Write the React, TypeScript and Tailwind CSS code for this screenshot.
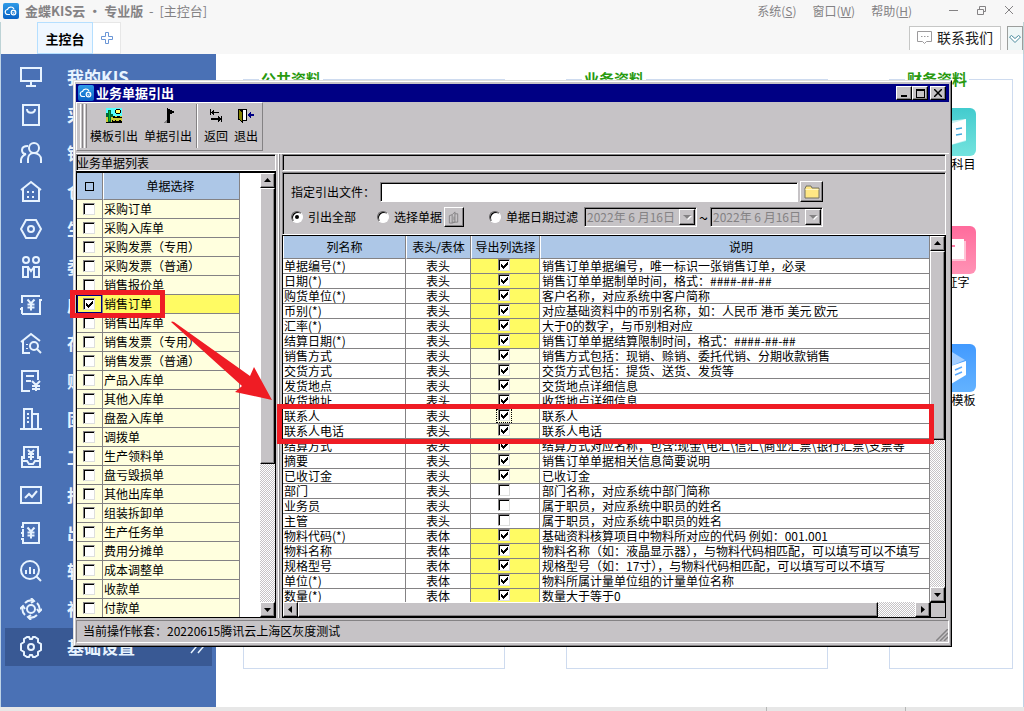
import { useState } from 'react'
import type { ReactNode } from 'react'

const raised =
  'border border-t-white border-l-white border-r-black border-b-black shadow-[inset_-1px_-1px_0_#848284] bg-[#c6c3c6]'
const sunken =
  'border border-t-[#848284] border-l-[#848284] border-r-white border-b-white shadow-[inset_1px_1px_0_#000]'
const dither =
  'bg-[conic-gradient(#fff_25%,#c6c3c6_0_50%,#fff_0_75%,#c6c3c6_0)] bg-[length:2px_2px]'

const yen = <path d="M7.5 5.5l3.5 4 3.5-4M11 9.500v7M7.500 10.500h7M7.500 13.500h7" />

const menu: { label: string; icon: ReactNode }[] = [
  { label: '我的KIS', icon: <path d="M1 2h20v13H1zM11 15v4M6 20h10" /> },
  { label: '采购管理', icon: <path d="M3 1h16v20H3zM7 5c0 5 8 5 8 0" /> },
  {
    label: '销售管理',
    icon: (
      <>
        <circle cx="14" cy="6" r="5" />
        <path d="M8 21v-4c0-3 2-6 6-6s7 3 7 6v4M8 4c-4 0-6 2-6 4 0 3 2 4 4 4-3 1-5 4-5 6v3" />
      </>
    ),
  },
  {
    label: '仓存管理',
    icon: <path d="M1 10L11 2l10 8M3 9v12h16V9M7 12h2M7 17h2M12 17h2M12 12h2" />,
  },
  {
    label: '生产管理',
    icon: (
      <>
        <path d="M6 2h10l5 9-5 9H6l-5-9z" />
        <circle cx="11" cy="11" r="3" />
      </>
    ),
  },
  {
    label: '委外管理',
    icon: (
      <>
        <circle cx="6" cy="4" r="3" />
        <circle cx="16" cy="4" r="3" />
        <path d="M3 11h5v10H3zM14 11h5v10h-5zM8 11l3 4 3-4" />
      </>
    ),
  },
  { label: '应收应付', icon: <>{yen}<path d="M2 9V2h18M22 6h-3M20 6v14H2M0 15h3M2 13v7" /></> },
  {
    label: '存货核算',
    icon: (
      <>
        <path d="M1 10L11 2l9 7M3 9v12h7M7 12v1M7 16v1" />
        <circle cx="14" cy="14" r="4" />
        <path d="M17 17l4 4" />
      </>
    ),
  },
  {
    label: '账务处理',
    icon: <path d="M10 21H2V1h16v9M6 6h8M6 11h5M12 11l4 4 4-4M16 15v6M12 16h8M12 19h8" />,
  },
  { label: '固定资产', icon: <path d="M0 21h22M4 21V1h8v20M12 6h6v15M7 6h2M7 10h2M7 14h2" /> },
  {
    label: '工资管理',
    icon: (
      <>
        <path d="M4 13V1h14v12M2 10v11h18V10M2 15l5 0 2 3h4l2-3h5" />
        <path d="M8 4l3 3 3-3M11 7v7M8 8h6M8 11h6" />
      </>
    ),
  },
  { label: '报表分析', icon: <path d="M1 3h20v16H1zM5 14l4-4 3 3 5-6" /> },
  { label: '出纳管理', icon: <>{yen}<path d="M3 4V1h16v20H3v-3M3 7v3M3 12v3M1 5h3M1 11h3M1 17h3" /></> },
  {
    label: '轻分析',
    icon: (
      <>
        <circle cx="10" cy="10" r="9" />
        <path d="M6 10v4M10 7v7M14 9v5M16 16l5 5" />
      </>
    ),
  },
  {
    label: '社区服务',
    icon: (
      <>
        <circle cx="11" cy="11" r="4" />
        <path d="M5 5a8.500 8.500 0 0 1 9-2M17 5a8.500 8.500 0 0 1 2 9M17 17a8.500 8.500 0 0 1-9 2M5 17a8.500 8.500 0 0 1-2-9" />
        <path d="M11 0l3 3-3 2M22 11l-3 3-2-3M11 22l-3-3 3-2M0 11l3-3 2 3" />
      </>
    ),
  },
  {
    label: '基础设置',
    icon: (
      <>
        <path d="M7 1h2l1 2h2l1-2h2l3 2v3l3 2v6l-3 2v3l-3 2h-2l-1-2h-2l-1 2H7l-3-2v-3l-3-2V8l3-2V3z" />
        <circle cx="11" cy="11" r="3" />
      </>
    ),
  },
]

const docTypes = [
  '采购订单', '采购入库单', '采购发票（专用）', '采购发票（普通）', '销售报价单', '销售订单',
  '销售出库单', '销售发票（专用）', '销售发票（普通）', '产品入库单', '其他入库单', '盘盈入库单',
  '调拨单', '生产领料单', '盘亏毁损单', '其他出库单', '组装拆卸单', '生产任务单', '费用分摊单',
  '成本调整单', '收款单', '付款单',
]

// kind: r = required, o = optional, n = not exported
const fields: [string, string, 'r' | 'o' | 'n', string][] = [
  ['单据编号(*)', '表头', 'r', '销售订单单据编号，唯一标识一张销售订单，必录'],
  ['日期(*)', '表头', 'r', '销售订单单据制单时间，格式：####-##-##'],
  ['购货单位(*)', '表头', 'r', '客户名称，对应系统中客户简称'],
  ['币别(*)', '表头', 'r', '对应基础资料中的币别名称，如：人民币 港币 美元 欧元'],
  ['汇率(*)', '表头', 'r', '大于0的数字，与币别相对应'],
  ['结算日期(*)', '表头', 'r', '销售订单单据结算限制时间，格式：####-##-##'],
  ['销售方式', '表头', 'o', '销售方式包括：现销、赊销、委托代销、分期收款销售'],
  ['交货方式', '表头', 'o', '交货方式包括：提货、送货、发货等'],
  ['发货地点', '表头', 'o', '交货地点详细信息'],
  ['收货地址', '表头', 'o', '收货地点详细信息'],
  ['联系人', '表头', 'o', '联系人'],
  ['联系人电话', '表头', 'o', '联系人电话'],
  ['结算方式', '表头', 'o', '结算方式对应名称，包含:现金\\电汇\\信汇\\商业汇票\\银行汇票\\支票等'],
  ['摘要', '表头', 'o', '销售订单单据相关信息简要说明'],
  ['已收订金', '表头', 'o', '已收订金'],
  ['部门', '表头', 'n', '部门名称，对应系统中部门简称'],
  ['业务员', '表头', 'n', '属于职员，对应系统中职员的姓名'],
  ['主管', '表头', 'n', '属于职员，对应系统中职员的姓名'],
  ['物料代码(*)', '表体', 'r', '基础资料核算项目中物料所对应的代码 例如：001.001'],
  ['物料名称', '表体', 'r', '物料名称（如：液晶显示器），与物料代码相匹配，可以填写可以不填写'],
  ['规格型号', '表体', 'r', '规格型号（如：17寸），与物料代码相匹配，可以填写可以不填写'],
  ['单位(*)', '表体', 'r', '物料所属计量单位组的计量单位名称'],
  ['数量(*)', '表体', 'r', '数量大于等于0'],
]

const kindBg = { r: 'bg-[#fffb63]', o: 'bg-[#ffffde]', n: 'bg-white' }

function CheckBox({ label, checked, onChange }: { label: string; checked: boolean; onChange: () => void }) {
  return (
    <span className="relative block size-3">
      <input
        type="checkbox"
        aria-label={label}
        checked={checked}
        onChange={onChange}
        className="peer block size-3 appearance-none border border-t-[#848284] border-l-[#848284] border-r-[#dedfde] border-b-[#dedfde] bg-white shadow-[inset_1px_1px_0_#000]"
      />
      <svg viewBox="0 0 12 12" className="pointer-events-none absolute inset-0 hidden peer-checked:block" shapeRendering="crispEdges">
        <path d="M3 5h1v1h1v1h1V6h1V5h1V4h1V3h1v3H9v1H8v1H7v1H6v1H5V9H4V8H3z" />
      </svg>
    </span>
  )
}

function Radio({ label, checked, onChange }: { label: string; checked: boolean; onChange: () => void }) {
  return (
    <label className="flex items-center gap-[5px]">
      <span className="relative block size-3">
        <input
          type="radio"
          name="range"
          checked={checked}
          onChange={onChange}
          className="peer block size-3 appearance-none rounded-full border border-t-[#636163] border-l-[#636163] border-r-white border-b-white bg-white shadow-[inset_1px_1px_0_#000]"
        />
        <span className="absolute top-1 left-1 hidden size-1 rounded-full bg-black peer-checked:block" />
      </span>
      {label}
    </label>
  )
}

function Logo({ className }: { className: string }) {
  return (
    <svg viewBox="0 0 16 16" className={className}>
      <defs>
        <linearGradient id="logo" x1="0" y1="0" x2="0" y2="1">
          <stop offset="0" stopColor="#2f9be8" />
          <stop offset="1" stopColor="#0a62c4" />
        </linearGradient>
      </defs>
      <rect width="16" height="16" rx="2" fill="url(#logo)" />
      <g fill="none" stroke="#fff" strokeWidth="1.200">
        <path d="M7 11.500H5a2.500 2.500 0 0 1-.5-5A3.500 3.500 0 0 1 11 6" />
        <circle cx="10.500" cy="9.500" r="2.300" />
        <path d="M9.500 9.500l1 1 1-2" strokeWidth=".8" />
      </g>
    </svg>
  )
}

function ScrollButton({ dir }: { dir: 'up' | 'down' | 'left' | 'right' }) {
  const d = { up: 'M4 9h7L7.500 5z', down: 'M4 6h7l-3.500 4z', left: 'M9 4v7L5 7.500z', right: 'M6 4v7l4-3.500z' }[dir]
  return (
    <button aria-label={dir} className={`block size-[15px] shrink-0 ${raised}`}>
      <svg viewBox="1 1 13 13" className="size-[13px]">
        <path d={d} />
      </svg>
    </button>
  )
}

function DateBox({ label }: { label: string }) {
  return (
    <div className={`flex h-5 w-[113px] items-center pl-0.5 ${sunken}`}>
      <input aria-label={label} disabled defaultValue="2022年 6 月16日" className="min-w-0 flex-1 text-xs text-[#848284]" />
      <button aria-label="选择日期" disabled className={`mr-px size-4 ${raised}`}>
        <svg viewBox="0 0 14 14" className="size-[14px]">
          <path d="M4 6h8l-4 4z" fill="#fff" />
          <path d="M3 5h8L7 9z" fill="#848284" />
        </svg>
      </button>
    </div>
  )
}

function ToolButton({ label, className, children }: { label: string; className: string; children: ReactNode }) {
  return (
    <button className={`flex flex-col items-center gap-1 ${className}`}>
      <svg viewBox="0 0 16 16" className="size-4" shapeRendering="crispEdges">
        {children}
      </svg>
      <span className="leading-4">{label}</span>
    </button>
  )
}

function Toolbar() {
  return (
    <div className="h-[51px]">
      <div className="flex h-[49px] w-fit border border-t-white border-l-white border-r-[#848284] border-b-[#848284] pt-[5px]">
        <div className="-mt-1 ml-[3px] flex h-[44px] gap-px">
          <span className="w-[3px] border-r border-l border-r-[#848284] border-l-white" />
          <span className="w-[3px] border-r border-l border-r-[#848284] border-l-white" />
        </div>
        <ToolButton label="模板引出" className="w-[54px]">
          <path d="M0 0h16v9H0z" fill="#5ff" />
          <path d="M0 8h16v7H0z" fill="#cc3" />
          <path d="M10 1h4v1h1v3h-1v1h-4V5H9V2h1z" />
          <path d="M10 2h4v3h-4z" fill="#ff6" />
          <path d="M2 2h3v12H2zM0 5h2v4H0zM5 6h2v3H5z" fill="#063" />
          <path d="M3 3h1v10H3z" fill="#0b3" />
          <path d="M7 8h2v1h2V8h3v1h2v1H7zM6 12h1v1h2v-1h1v1h3v-1h2v1h1v1H6zM0 14h16v1H0z" />
        </ToolButton>
        <ToolButton label="单据引出" className="w-[54px]">
          <path d="M7 0h1v1h2v1h2v1h2v2h-2v1h-2v9H7z" />
          <path d="M7 12v3H4v-1h1v-1h1v-1z" fill="#848284" />
        </ToolButton>
        <span className="-mt-1 mr-px ml-px h-[44px] w-[2px] border-r border-l border-r-white border-l-[#848284]" />
        <ToolButton label="返回" className="ml-0.5 w-[30px]">
          <path d="M2 1h1v6H2zM3 4h1V3h1V2h1v2h5v1H6v2H5V6H4V5H3zM13 8h1v6h-1zM3 10h7V8h1v1h1v1h1v2h-1v1h-1v1h-1v-2H3z" />
        </ToolButton>
        <ToolButton label="退出" className="mr-px w-[30px]">
          <path d="M0 1h9v12H5v2H4v-1H3v-1H2v-1H0z" />
          <path d="M5 2h3v10H5z" fill="#fff" />
          <path d="M1 2h1v1h1v1h1v9H3v-1H2v-1H1z" fill="#848200" />
          <path d="M10 6h1V5h1V4h1v2h3v2h-3v2h-1V9h-1V8h-1z" fill="#000084" />
        </ToolButton>
      </div>
    </div>
  )
}

function DocList() {
  const [picked, setPicked] = useState(['销售订单'])
  const toggle = (name: string) =>
    setPicked(picked.includes(name) ? picked.filter((n) => n !== name) : [...picked, name])

  return (
    <div className="w-[200px] shrink-0">
      <h2 className={`h-[17px] leading-[15px] ${sunken}`}>业务单据列表</h2>
      <div className="flex border-t-2 border-b border-l border-r border-black bg-white">
        <div className="h-[444px] flex-1 overflow-hidden">
          <table className="w-[163px] table-fixed border-separate border-spacing-0">
            <colgroup>
              <col className="w-[26px]" />
              <col />
            </colgroup>
            <thead>
              <tr className="bg-[#adc7e7] leading-[26px]">
                <th className="h-[27px] border-r border-b border-[#848284] p-0 pr-px">
                  <span className="mx-auto block size-[9px] border border-black" />
                </th>
                <th className="h-[27px] border-r border-b border-l border-[#848284] border-l-white p-0 pr-0.5 font-normal">单据选择</th>
              </tr>
            </thead>
            <tbody>
              {docTypes.map((name) => {
                const on = picked.includes(name)
                return (
                  <tr key={name} className={on ? 'bg-[#fffb63]' : 'bg-[#ffffde]'}>
                    <td className="h-[19px] border-r border-b border-[#848284] p-0">
                      <div className={`flex h-[18px] items-center justify-center border pr-px pb-px ${on ? 'border-[#000084]' : 'border-transparent'}`}>
                        <CheckBox label={name} checked={on} onChange={() => toggle(name)} />
                      </div>
                    </td>
                    <td className="h-[19px] border-r border-b border-[#848284] p-0 pl-px leading-[18px] whitespace-nowrap">{name}</td>
                  </tr>
                )
              })}
            </tbody>
          </table>
        </div>
        <div className={`flex w-[15px] flex-col ${dither}`}>
          <ScrollButton dir="up" />
          <div className={`h-[276px] ${raised}`} />
          <div className="flex-1" />
          <ScrollButton dir="down" />
        </div>
      </div>
    </div>
  )
}

function ExportForm() {
  const [range, setRange] = useState('all')
  return (
    <div className={`h-[63px] pt-2 pl-2 ${sunken}`}>
      <div className="flex items-center">
        <label htmlFor="file" className="w-[89px]">
          指定引出文件：
        </label>
        <input id="file" className={`h-5 w-[418px] bg-white px-1 ${sunken}`} />
        <button aria-label="浏览" className={`ml-0.5 flex h-[21px] w-[23px] items-center justify-center ${raised}`}>
          <svg viewBox="0 0 16 14" className="h-[14px] w-4">
            <path d="M1 13V3l1-1V1h5l1 2h7v10z" fill="#ffe784" stroke="#737163" />
            <path d="M1.500 4.500h13" stroke="#fff7c6" />
          </svg>
        </button>
      </div>
      <div className="mt-[5px] flex h-5 items-center">
        <div className="w-[86px]">
          <Radio label="引出全部" checked={range === 'all'} onChange={() => setRange('all')} />
        </div>
        <Radio label="选择单据" checked={range === 'pick'} onChange={() => setRange('pick')} />
        <button aria-label="选择" className={`ml-0.5 flex size-5 items-center justify-center ${raised}`}>
          <svg viewBox="0 0 12 14" className="h-[13px] w-3" fill="none" stroke="#848284">
            <path d="M1 5l3-1v9H1zM4 4l3-3v11l-3 1M7 3h3v9H4M6 6v4" />
          </svg>
        </button>
        <div className="ml-[25px] w-[95px]">
          <Radio label="单据日期过滤" checked={range === 'date'} onChange={() => setRange('date')} />
        </div>
        <DateBox label="开始日期" />
        <span className="w-[13px] text-center text-base leading-5">~</span>
        <DateBox label="结束日期" />
      </div>
    </div>
  )
}

function FieldTable() {
  const [off, setOff] = useState(fields.filter((f) => f[2] === 'n').map((f) => f[0]))
  const toggle = (name: string) => setOff(off.includes(name) ? off.filter((n) => n !== name) : [...off, name])
  const th = 'h-[23px] border-r border-b border-l border-[#848284] border-l-white p-0 font-normal leading-[22px]'
  const td = 'h-[15px] border-r border-b border-[#848284] p-0 leading-[14px] whitespace-nowrap'

  return (
    <div className="border border-black bg-white">
      <div className="flex">
        <div className="h-[366px] min-w-0 flex-1 overflow-hidden">
          <table className="w-full table-fixed border-separate border-spacing-0">
            <colgroup>
              <col className="w-[123px]" />
              <col className="w-[65px]" />
              <col className="w-[69px]" />
              <col />
            </colgroup>
            <thead>
              <tr className="bg-[#adc7e7]">
                <th className={th}>列名称</th>
                <th className={th}>表头/表体</th>
                <th className={th}>导出列选择</th>
                <th className={`${th} pl-3`}>说明</th>
              </tr>
            </thead>
            <tbody>
              {fields.map(([name, part, kind, note]) => (
                <tr key={name}>
                  <td className={`${td} pl-px`}>{name}</td>
                  <td className={`${td} text-center`}>{part}</td>
                  <td className={`${td} ${kindBg[kind]}`}>
                    <div className="flex h-[14px] justify-center pr-0.5">
                      <div className={name === '联系人' ? 'px-0.5 outline-1 -outline-offset-1 outline-dotted' : ''}>
                        <CheckBox label={name} checked={!off.includes(name)} onChange={() => toggle(name)} />
                      </div>
                    </div>
                  </td>
                  <td className={`${td} pl-0.5`}>{note}</td>
                </tr>
              ))}
            </tbody>
          </table>
        </div>
        <div className={`flex w-[15px] flex-col ${dither}`}>
          <ScrollButton dir="up" />
          <div className={`h-[189px] ${raised}`} />
          <div className="flex-1" />
          <ScrollButton dir="down" />
        </div>
      </div>
      <div className="flex h-[15px] bg-[#c6c3c6]">
        <div className={`flex flex-1 ${dither}`}>
          <ScrollButton dir="left" />
          <div className={`flex-1 ${raised}`} />
          <div className="w-[37px]" />
          <ScrollButton dir="right" />
        </div>
        <div className="w-[15px] border-t border-l border-black" />
      </div>
    </div>
  )
}

function ExportDialog() {
  return (
    <section
      role="dialog"
      aria-label="业务单据引出"
      className="absolute top-20 right-[72px] left-[73px] border border-t-[#dedfde] border-l-[#dedfde] border-r-black border-b-black bg-[#c6c3c6] text-xs text-black"
    >
      <div className="border border-t-white border-l-white border-r-[#848284] border-b-[#848284] px-px py-0.5">
        <header className="flex h-[18px] items-center gap-0.5 bg-[#000084] pr-[3px] pl-0.5 text-white">
          <Logo className="size-4" />
          <h1 className="flex-1 text-[13px] leading-[18px] font-bold">业务单据引出</h1>
          <div className="flex h-[14px]">
            <button aria-label="最小化" className={`flex w-4 items-end justify-center ${raised}`}>
              <span className="mb-0.5 h-0.5 w-1.5 bg-black" />
            </button>
            <button aria-label="最大化" className={`flex w-4 items-center justify-center ${raised}`}>
              <span className="h-[9px] w-[9px] border border-t-2 border-black" />
            </button>
            <button aria-label="关闭" className={`ml-0.5 flex w-4 items-center justify-center ${raised}`}>
              <svg viewBox="0 0 8 8" className="size-2" stroke="#000" strokeWidth="1.500">
                <path d="M0 0l8 8M8 0L0 8" />
              </svg>
            </button>
          </div>
        </header>
        <Toolbar />
        <div className="flex border-t border-white">
          <DocList />
          <div className="mx-0.5 w-0.5 border-r border-l border-r-[#848284] border-l-white" />
          <div className="mr-[3px] min-w-0 flex-1">
            <div className={`mb-px h-[17px] ${sunken}`} />
            <ExportForm />
            <FieldTable />
          </div>
        </div>
        <footer className="mt-0.5 flex h-[23px] items-center justify-between border border-t-[#848284] border-l-[#848284] border-r-white border-b-white pb-px pl-1.5">
          当前操作帐套：20220615腾讯云上海区灰度测试
          <svg viewBox="0 0 12 12" className="size-3 self-end" stroke="#848284" strokeWidth="1.500">
            <path d="M0 12L12 0M4 12l8-8M8 12l4-4" />
          </svg>
        </footer>
      </div>

      {/* guide marks */}
      <div className="pointer-events-none absolute top-[209px] left-[-4px] h-7 w-[95px] border-[5px] border-[#ef1c24]" />
      <div className="pointer-events-none absolute top-[323px] right-[17px] left-[203px] h-10 border-[5px] border-[#ef1c24]" />
      <svg viewBox="170 320 104 82" className="pointer-events-none absolute top-[239px] left-24 h-[82px] w-[104px]">
        <path d="M171 322q1-1 3 0l76 54 4-9 18 33-37-8 7-6z" fill="#ef1c24" />
      </svg>
    </section>
  )
}

function Tile({ label, className, children }: { label: string; className: string; children: ReactNode }) {
  return (
    <a href="#" className="flex h-[86px] flex-col items-center text-xs">
      <svg viewBox="0 0 48 48" className={`size-12 rounded-md ${className}`}>
        {children}
      </svg>
      {label}
    </a>
  )
}

function Group({ title, children }: { title: string; children?: ReactNode }) {
  return (
    <fieldset className="min-w-0 border border-[#cedbef]">
      <legend className="ml-[15px] px-0.5 text-[15px] leading-5 font-bold text-[#299a10]">{title}</legend>
      {children}
    </fieldset>
  )
}

export default function App() {
  return (
    <div className="relative flex min-h-screen flex-col bg-white font-['Noto_Sans_CJK_SC','Liberation_Sans',sans-serif] text-black">
      <header className="bg-[#f7f7f7]">
        <div className="flex h-[22px] items-center pl-[3px] text-[#848284]">
          <Logo className="size-4" />
          <span className="ml-1.5 flex-1 text-[13px] font-bold whitespace-pre">
            金蝶KIS云 · 专业版 <span className="font-normal"> -  [主控台]</span>
          </span>
          <nav className="flex gap-4 text-xs">
            <button>系统(<u>S</u>)</button>
            <button>窗口(<u>W</u>)</button>
            <button>帮助(<u>H</u>)</button>
          </nav>
          <svg viewBox="0 0 80 22" className="ml-8 h-[22px] w-20" fill="none" stroke="#848284">
            <path d="M5 10.500h9M33.500 9.500h6v5h-6zM35.500 9.500v-3h6v5h-2M61 6l8 8M69 6l-8 8" />
          </svg>
        </div>
        <div className="flex h-8 border-r border-l border-[#bdd3d6] pl-9">
          <button className="w-14 border border-[#b5dfff] bg-[#eff7ff] pt-0.5 text-[13px] font-bold">主控台</button>
          <button aria-label="新建" className="flex w-7 items-center justify-center border border-l-0 border-[#e7e7e7] bg-white">
            <svg viewBox="0 0 12 12" className="size-3" fill="none" stroke="#6b96d6">
              <path d="M4.500.5h3v4h4v3h-4v4h-3v-4h-4v-3h4z" />
            </svg>
          </button>
          <div className="flex-1" />
          <button className="mt-1 flex h-6 w-[92px] items-center gap-[5px] border border-b-0 border-[#c6c7c6] bg-white pb-[3px] pl-[7px] text-sm text-[#212021]">
            <svg viewBox="0 0 15 13" className="h-[13px] w-[15px]" fill="none" stroke="#9c9a9c">
              <path d="M.5.5h14v10h-5L7.500 12.500l-2-2h-5zM4 5.500h1.500M7 5.500h1.500M10 5.500h1.500" />
            </svg>
            联系我们
          </button>
          <button aria-label="更多" className="mt-1 ml-1.5 flex h-6 w-4 items-center justify-center border border-b-0 border-[#9c9e9c] bg-[#eff7f7]">
            <svg viewBox="0 0 12 8" className="h-2 w-3" fill="#fff" stroke="#4a8a9c">
              <path d="M.5 2l2-1.500L6 3.500 9.500.5l2 1.500L6 7.500z" />
            </svg>
          </button>
        </div>
      </header>

      <div className="flex flex-1 border-r border-l border-[#bdd3e7]">
        <nav className="w-[215px] shrink-0 bg-[#4a71b5] px-1 pt-1 pb-10 text-[#e7f3ff]">
          {menu.map((item, i) => (
            <a
              key={item.label}
              href="#"
              className={`flex h-[38px] items-center pl-[15px] text-[17px] font-bold ${i === menu.length - 1 ? 'bg-[#395994]' : ''}`}
            >
              <svg viewBox="0 0 22 22" className="mr-[25px] size-[22px]" fill="none" stroke="currentColor" strokeWidth="2">
                {item.icon}
              </svg>
              <span className="flex-1">{item.label}</span>
              {i === menu.length - 1 && (
                <svg viewBox="0 0 14 14" className="mr-2 size-3.5" fill="none" stroke="currentColor" strokeWidth="1.500">
                  <path d="M1 1l5 6-5 6M8 1l5 6-5 6" />
                </svg>
              )}
            </a>
          ))}
        </nav>
        <main className="grid flex-1 grid-cols-[262fr_262fr_124fr] gap-[61px] pt-[15px] pr-2.5 pb-[38px] pl-[27px]">
          <Group title="公共资料" />
          <Group title="业务资料" />
          <Group title="财务资料">
            <div className="flex flex-col gap-8 pt-[19px] pl-px">
              <Tile label="会计科目" className="bg-linear-to-b from-[#42cbce] to-[#73e3de]">
                <path d="M12 14l26-3v22l-26 7z" fill="#c6f3f3" />
                <path d="M22 16l16-5v21l-16 5z" fill="#fff" />
                <path d="M28 21l6-1M28 27l6-1" stroke="#4ad" strokeWidth="1.500" />
              </Tile>
              <Tile label="凭证字" className="bg-linear-to-b from-[#ff6b9c] to-[#ff92b5]">
                <path d="M13 15h25v20H13z" fill="#ffc3d6" />
                <path d="M11 13h25v20H11z" fill="#fff" />
                <path d="M18 20h9" stroke="#ff7ba5" strokeWidth="2" />
              </Tile>
              <Tile label="凭证模板" className="bg-linear-to-b from-[#429aff] to-[#63b2ff]">
                <path d="M24 8l13 8-14 6-12-6z" fill="#a5cfff" />
                <path d="M23 22l15-5v14l-15 9z" fill="#fff" />
                <path d="M27 26l7-3M27 31l7-3" stroke="#5aaaff" strokeWidth="1.500" />
              </Tile>
            </div>
          </Group>
        </main>
      </div>
      <div className="flex h-1 justify-end gap-[138px] bg-[#e7e7e7] pr-[118px]">
        <span className="w-px bg-[#b5b6b5]" />
        <span className="w-px bg-[#b5b6b5]" />
      </div>
      <ExportDialog />
    </div>
  )
}
